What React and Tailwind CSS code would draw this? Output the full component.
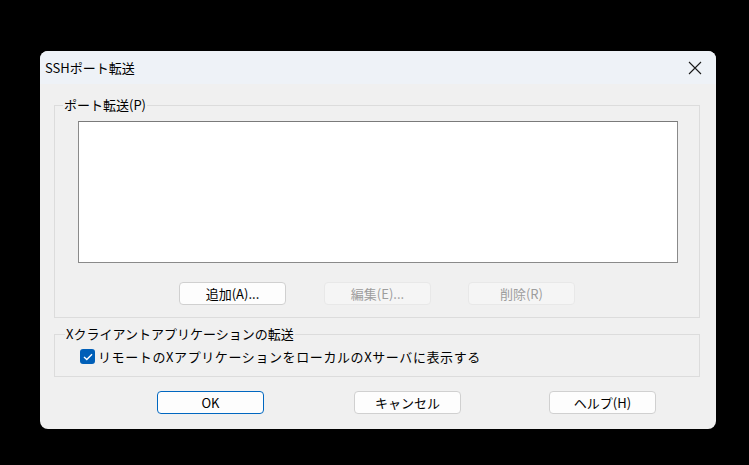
import React from 'react';

const font = { fontFamily: '"Noto Sans CJK JP", "Noto Sans", sans-serif' };

const Btn = ({ children, disabled, primary, className = '' }) => (
    <button
        className={
            'w-[107px] h-[23px] rounded-[4px] text-[13px] leading-none flex items-center justify-center ' +
            (disabled
                ? 'bg-[#f5f5f5] border border-[#e8e8e8] text-[#9d9d9d] '
                : primary
                    ? 'bg-[#fdfdfd] border-[1.5px] border-[#0067c0] text-black '
                    : 'bg-[#fdfdfd] border border-[#d0d0d0] text-black ') +
            className
        }
    >
        {children}
    </button>
);

export default function App() {
    return (
        <div className="w-[749px] h-[465px] bg-black pt-[51px] pl-[40px]" style={font}>
            <div className="w-[676px] h-[378px] rounded-[8px] bg-[#f0f0f0] overflow-hidden flex flex-col">
                {/* title bar */}
                <div className="h-[33px] bg-[#eef2f7] flex items-center justify-between pl-[5px] pr-[14px]">
                    <span className="text-[13px] text-black">SSHポート転送</span>
                    <svg width="14" height="14" viewBox="0 0 14 14">
                        <path d="M1 1 L13 13 M13 1 L1 13" stroke="#1a1a1a" strokeWidth="1.1" fill="none" />
                    </svg>
                </div>

                <div className="flex-1 pl-[14px] pr-[16px] pt-[14px]">
                    {/* port forwarding group */}
                    <fieldset className="border border-[#dcdcdc] h-[220px] pl-[23px] pr-[21px]">
                        <legend className="text-[13px] leading-[14px] ml-[-15px] px-[1px] text-black">ポート転送(P)</legend>
                        <div className="mt-[9px] h-[142px] bg-white border border-[#8a8a8a] border-t-[#7a7a7a]"></div>
                        <div className="flex pl-[101px] mt-[19px]">
                            <Btn>追加(A)...</Btn>
                            <Btn disabled className="ml-[38px]">編集(E)...</Btn>
                            <Btn disabled className="ml-[37px]">削除(R)</Btn>
                        </div>
                    </fieldset>

                    {/* X forwarding group */}
                    <fieldset className="mt-[9px] border border-[#dcdcdc] h-[50px] pl-[25px]">
                        <legend className="text-[13px] leading-[14px] ml-[-15px] px-[1px] text-black">Xクライアントアプリケーションの転送</legend>
                        <label className="flex items-center gap-[3px] mt-[6px] text-[13px] text-black tracking-[0.6px]">
                            <span className="w-[15px] h-[15px] rounded-[3px] bg-[#005fb8] flex items-center justify-center">
                                <svg width="10" height="8" viewBox="0 0 10 8">
                                    <path d="M1 4 L3.8 6.6 L9 1.2" stroke="white" strokeWidth="1.4" fill="none" />
                                </svg>
                            </span>
                            リモートのXアプリケーションをローカルのXサーバに表示する
                        </label>
                    </fieldset>

                    <div className="flex pl-[103px] mt-[14px]">
                        <Btn primary>OK</Btn>
                        <Btn className="ml-[90px]">キャンセル</Btn>
                        <Btn className="ml-[88px]">ヘルプ(H)</Btn>
                    </div>
                </div>
            </div>
        </div>
    );
}
